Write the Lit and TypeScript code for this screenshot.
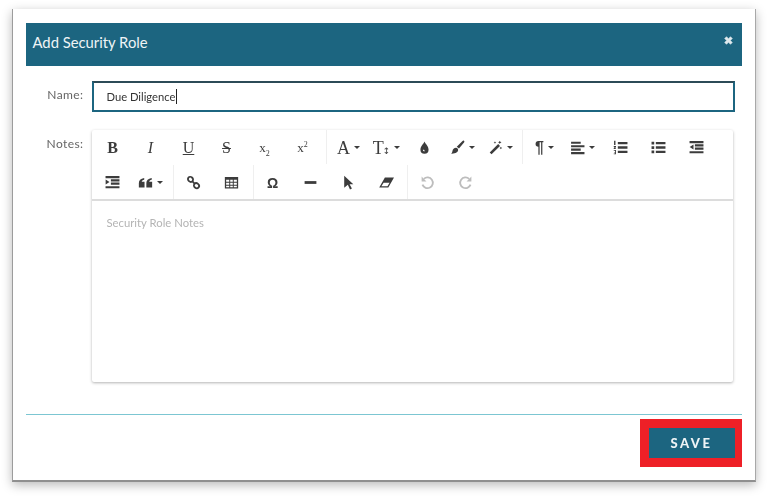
import { LitElement, html, css, svg } from "lit";
import { customElement } from "lit/decorators.js";

const ic = (body: unknown, w = 15, h = 15) =>
  html`<svg width=${w} height=${h} viewBox="0 0 14 14" fill="currentColor">${body}</svg>`;

const icons: Record<string, unknown> = {
  drop: ic(svg`<path fill-rule="evenodd" d="M7 1.500C8 4 10.800 6 10.800 9a3.800 3.800 0 0 1-7.600 0C3.200 6 6 4 7 1.500ZM5.500 9.200a1.500 1.500 0 0 0 1.500 1.600v-1.300a.6.6 0 0 1-.4-.5Z"/>`),
  brush: ic(svg`<path d="M13 .8c.6.4.5 1 .1 1.500L8.400 8 6.300 6.300 11.700 1c.4-.4.9-.6 1.300-.2ZM5.600 7.200c1.100 0 2.100.9 2 2.200-.2 2-2.200 3.600-6.600 3.400.9-.7 1.100-1.400 1.300-2.600.2-1.600 1.600-3 3.300-3Z"/>`),
  wand: ic(svg`<path d="M9.500 3.800l1.700 1.700L3.300 13.400 1.600 11.700ZM11 .6l.5 1.100 1.100.5-1.100.5-.5 1.100-.5-1.100-1.100-.5 1.100-.5ZM6.500 1.200l.4.8.8.4-.8.4-.4.8-.4-.8-.8-.4.8-.4ZM12 6.300l.4.8.8.4-.8.4-.4.8-.4-.8-.8-.4.8-.4Z"/>`),
  align: ic(svg`<path d="M1 1.600h9v2H1ZM1 4.800h12.500v2H1ZM1 8h9v2H1ZM1 11.200h12.500v2H1Z"/>`),
  ol: ic(svg`<path d="M4.500 1.800h9v2.200h-9ZM4.500 5.900h9v2.200h-9ZM4.500 10h9v2.200h-9ZM1 .6h1.300v4H1ZM.7 5.600h2.100v1l-1 1h1v.8H.7v-.9l1-1h-1ZM.7 9.400h2.100v3.800H.7v-.7h1.300v-.8H1.100v-.6h.9v-1H.7Z"/>`),
  ul: ic(svg`<path d="M4.500 1.800h9v2.200h-9ZM4.500 5.900h9v2.200h-9ZM4.500 10h9v2.200h-9ZM.5 1.700h2.500v2.500H.5ZM.5 5.800h2.500v2.500H.5ZM.5 9.800h2.500v2.500H.5Z"/>`),
  indent: ic(svg`<path d="M.5 1h13v2h-13ZM5.500 4h8v2h-8ZM5.500 7.100h8v2h-8ZM.5 10.400h13v2h-13ZM4.200 4.200v4.700L.6 6.600Z"/>`),
  outdent: ic(svg`<path d="M.5 1h13v2h-13ZM5.500 4h8v2h-8ZM5.500 7.100h8v2h-8ZM.5 10.400h13v2h-13ZM.6 4.200v4.700l3.600-2.300Z"/>`),
  quote: ic(svg`<path d="M.8 7.500C.8 5 2.300 3.300 5.800 2.800v1.600C4.300 4.700 3.600 5.300 3.500 6.200h2.600v5.400H.8ZM7.800 7.500c0-2.500 1.500-4.200 5-4.700v1.600c-1.500.3-2.200.9-2.300 1.800h2.700v5.400H7.800Z"/>`),
  link: ic(svg`<g fill="none" stroke="currentColor" stroke-width="1.700"><ellipse cx="4.200" cy="4" rx="2.500" ry="2.200" transform="rotate(40 4.200 4)"/><ellipse cx="9.800" cy="10" rx="2.500" ry="2.200" transform="rotate(40 9.800 10)"/><path d="M5.800 5.800l2.400 2.400"/></g>`),
  table: ic(svg`<path fill-rule="evenodd" d="M.8 1.800h12.400v10.800H.8ZM2 4.400v1.900h2.900V4.400ZM5.800 4.400v1.900h2.400V4.400ZM9.100 4.400v1.900H12V4.400ZM2 7.200v1.900h2.900V7.200ZM5.800 7.200v1.900h2.400V7.200ZM9.100 7.200v1.900H12V7.200ZM2 10v1.500h2.900V10ZM5.800 10v1.500h2.400V10ZM9.100 10v1.500H12V10Z"/>`),
  minus: ic(svg`<path d="M1.500 5.700h11v2.600h-11Z"/>`),
  cursor: ic(svg`<path d="M3 .6l8.500 8H8l2.200 4-1.800.9-2-4.300L3 12Z"/>`),
  eraser: ic(svg`<path fill-rule="evenodd" d="M5.500 2.300h8.500L8.700 11.700H.2ZM4.300 7.300 2.200 10.500h5.700l2-3.200Z"/>`),
  undo: ic(svg`<g fill="none" stroke="currentColor" stroke-width="1.700"><path d="M3.600 3.600A5 5 0 1 1 2.300 9"/></g><path d="M1.500 1.500v4.500H6Z"/>`),
  redo: ic(svg`<g fill="none" stroke="currentColor" stroke-width="1.700"><path d="M10.400 3.600A5 5 0 1 0 11.700 9"/></g><path d="M12.500 1.500v4.500H8Z"/>`),
};

type Item = { t?: string; cls?: string; sub?: string; sup?: string; arrows?: boolean; i?: string; caret?: boolean; off?: boolean };
type Group = { before?: [number, number]; items: Item[] };

const row1: Group[] = [
  {
    items: [
      { t: "B", cls: "serif bold" },
      { t: "I", cls: "serif ital" },
      { t: "U", cls: "serif under" },
      { t: "S", cls: "serif strike" },
      { t: "x", cls: "small", sub: "2" },
      { t: "x", cls: "small", sup: "2" },
    ],
  },
  {
    before: [4, 3],
    items: [
      { t: "A", cls: "serif big", caret: true },
      { t: "T", cls: "serif big", arrows: true, caret: true },
      { i: "drop" },
      { i: "brush", caret: true },
      { i: "wand", caret: true },
    ],
  },
  {
    before: [2, 3],
    items: [
      { t: "¶", cls: "para", caret: true },
      { i: "align", caret: true },
      { i: "ol" },
      { i: "ul" },
      { i: "indent" },
    ],
  },
];

const row2: Group[] = [
  { items: [{ i: "outdent" }, { i: "quote", caret: true }] },
  { before: [3, 1], items: [{ i: "link" }, { i: "table" }] },
  { before: [2, 0], items: [{ t: "Ω", cls: "omega" }, { i: "minus" }, { i: "cursor" }, { i: "eraser" }] },
  { before: [1, 1], items: [{ i: "undo", off: true }, { i: "redo", off: true }] },
];

@customElement("app-root")
export class AppRoot extends LitElement {
  static styles = css`
    :host {
      display: block;
      width: 768px;
      height: 497px;
      background: #fff;
      font-family: Lato, "Open Sans", sans-serif;
      overflow: hidden;
    }
    .page {
      padding: 9px 12px 0;
      box-sizing: border-box;
      height: 497px;
      filter: blur(0.45px);
    }
    .dialog {
      width: 744px;
      height: 473px;
      box-sizing: border-box;
      padding: 14px 13.500px 0 12.500px;
      background: #fff;
      border-left: 1.500px solid #9c9c9c;
      border-right: 1.500px solid #a8a8a8;
      border-bottom: 2px solid #8f8f8f;
      box-shadow: 0 3px 10px rgba(0, 0, 0, 0.28);
    }
    .head {
      height: 43px;
      background: #1c6580;
      color: #eef4f6;
      display: flex;
      justify-content: space-between;
      padding: 0 8px 0 7px;
      box-sizing: border-box;
    }
    .title {
      font-size: 14.800px;
      line-height: 39px;
    }
    .close {
      margin-top: 12px;
      width: 11px;
      height: 11px;
      color: #dfe9ed;
    }
    .row {
      display: flex;
      align-items: flex-start;
    }
    .row.name {
      margin-top: 15px;
    }
    .row.notes {
      margin-top: 18px;
    }
    .label {
      width: 58px;
      margin-right: 8px;
      text-align: right;
      font-size: 12px;
      letter-spacing: 0.400px;
      color: #666;
      line-height: 28px;
    }
    .input {
      width: 643px;
      height: 31px;
      box-sizing: border-box;
      border: 2px solid #1c6580;
      border-top-color: #2c4b57;
      padding-left: 13px;
      font-size: 11.200px;
      color: #333;
      display: flex;
      align-items: center;
    }
    .caretline {
      display: inline-block;
      width: 1px;
      height: 15px;
      background: #222;
      margin-left: 0.500px;
    }
    .editor {
      width: 641px;
      height: 252px;
      box-sizing: border-box;
      background: #fff;
      border-radius: 2px;
      box-shadow: 0 1px 3px rgba(0, 0, 0, 0.3);
    }
    .toolbar {
      height: 71px;
      box-sizing: border-box;
      padding: 0 2px;
      border-bottom: 2px solid #dcdcdc;
    }
    .tbrow {
      display: flex;
      height: 35px;
    }
    .group {
      display: flex;
    }
    .sep {
      width: 1px;
      height: 34px;
      background: #efefef;
    }
    .btn {
      width: 38px;
      height: 35px;
      display: flex;
      align-items: center;
      justify-content: center;
      gap: 4px;
      color: #3c3c3c;
      font-size: 14px;
      font-family: "Liberation Sans", sans-serif;
      line-height: 1;
    }
    .btn.off {
      color: #bdbdbd;
    }
    .serif {
      font-family: "Liberation Serif", serif;
      font-size: 16px;
    }
    .big {
      font-size: 18px;
    }
    .updn {
      font-family: "DejaVu Sans", sans-serif;
      font-size: 9px;
      margin-left: -1px;
    }
    .bold {
      font-weight: 700;
    }
    .ital {
      font-style: italic;
    }
    .under {
      text-decoration: underline;
    }
    .strike {
      text-decoration: line-through;
    }
    .small {
      font-size: 13px;
      font-family: "Liberation Serif", serif;
    }
    .small sub,
    .small sup {
      font-size: 8px;
      line-height: 0;
    }
    .para {
      font-size: 16px;
      font-weight: 700;
    }
    .omega {
      font-weight: 700;
      font-size: 14px;
    }
    .car {
      width: 0;
      height: 0;
      border-left: 3.500px solid transparent;
      border-right: 3.500px solid transparent;
      border-top: 3.500px solid #3c3c3c;
    }
    .placeholder {
      padding: 15px;
      font-size: 11.300px;
      color: #b4b4b4;
    }
    .rule {
      height: 1px;
      background: #7cc6d2;
      margin-top: 32px;
    }
    .foot {
      display: flex;
      justify-content: flex-end;
      margin-top: 4px;
    }
    .save {
      width: 86px;
      height: 30px;
      box-sizing: content-box;
      border: 9px solid #ee2027;
      border-right-width: 7px;
      background: #1c6580;
      color: #eef4f6;
      font-weight: 900;
      font-size: 13px;
      letter-spacing: 2.500px;
      display: flex;
      align-items: center;
      justify-content: center;
    }
  `;

  private btn(b: Item) {
    return html`<div class="btn ${b.off ? "off" : ""}">
      ${b.i
        ? icons[b.i]
        : html`<span class=${b.cls ?? ""}>${b.t}${b.arrows ? html`<span class="updn">↕</span>` : ""}${b.sub ? html`<sub>${b.sub}</sub>` : ""}${b.sup ? html`<sup>${b.sup}</sup>` : ""}</span>`}
      ${b.caret ? html`<span class="car"></span>` : ""}
    </div>`;
  }

  private tbrow(groups: Group[]) {
    return html`<div class="tbrow">
      ${groups.map(
        (g) => html`${g.before
          ? html`<div class="sep" style="margin-left:${g.before[0]}px;margin-right:${g.before[1]}px"></div>`
          : ""}
          <div class="group">${g.items.map((b) => this.btn(b))}</div>`
      )}
    </div>`;
  }

  render() {
    return html`<div class="page">
      <div class="dialog">
        <div class="head">
          <div class="title">Add Security Role</div>
          <svg class="close" viewBox="0 0 10 10"><path d="M1.500 3.200 3.200 1.500 5 3.300 6.800 1.500 8.500 3.200 6.700 5 8.500 6.800 6.800 8.500 5 6.700 3.200 8.500 1.500 6.800 3.300 5Z" fill="currentColor" stroke="currentColor" stroke-width=".5"/></svg>
        </div>
        <div class="row name">
          <div class="label">Name:</div>
          <div class="input">Due Diligence<span class="caretline"></span></div>
        </div>
        <div class="row notes">
          <div class="label">Notes:</div>
          <div class="editor">
            <div class="toolbar">${this.tbrow(row1)}${this.tbrow(row2)}</div>
            <div class="placeholder">Security Role Notes</div>
          </div>
        </div>
        <div class="rule"></div>
        <div class="foot"><div class="save">SAVE</div></div>
      </div>
    </div>`;
  }
}
